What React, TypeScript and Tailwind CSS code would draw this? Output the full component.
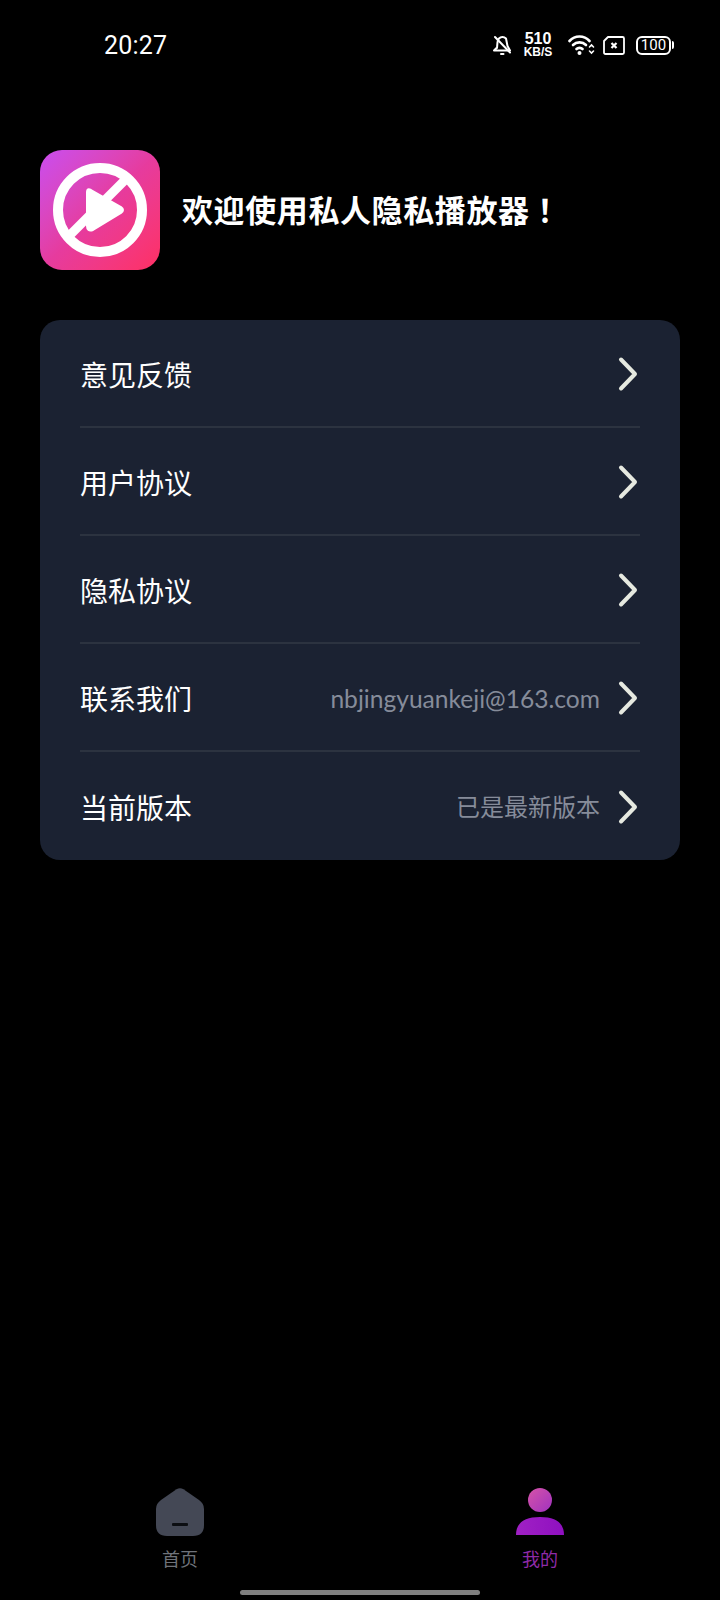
import React from "react";

const cjk = "font-['Noto_Sans_CJK_SC','Noto_Sans',sans-serif]";

function Chevron() {
  return (
    <svg width="20" height="36" viewBox="0 0 20 36" fill="none" className="shrink-0 mr-[2px] translate-y-[1px]">
      <path d="M3 3.5 L17 18 L3 32.5" stroke="#e6e9e0" strokeWidth="4" strokeLinecap="round" strokeLinejoin="round" />
    </svg>
  );
}

function Row({ label, value, last, en }: { label: string; value?: string; last?: boolean; en?: boolean }) {
  return (
    <div className={`mx-10 h-[108px] flex items-center justify-between ${last ? "" : "border-b-2 border-[#2c3340]"}`}>
      <span className={`text-[28px] leading-none text-white translate-y-[1px] ${cjk}`}>{label}</span>
      <div className="flex items-center">
        {value && (
          <span className={`leading-none text-[#868c9a] mr-[18px] ${en ? "text-[24.6px] font-['Lato',sans-serif] font-normal translate-y-[2px]" : `text-[24px] ${cjk}`}`}>
            {value}
          </span>
        )}
        <Chevron />
      </div>
    </div>
  );
}

export default function App() {
  return (
    <div className="w-[720px] h-[1600px] bg-black flex flex-col overflow-hidden font-['Inter',sans-serif]">
      {/* Status bar */}
      <div className="h-[90px] pl-[104px] pr-[46px] flex items-center justify-between text-white">
        <span className="text-[25px] leading-none font-['Roboto',sans-serif] tracking-[0.2px]">20:27</span>
        <div className="flex items-center">
          <svg width="20" height="22" viewBox="0 0 20 22" fill="none" stroke="white" strokeWidth="2" strokeLinecap="round" strokeLinejoin="round">
            <path d="M5 14 C5.5 10 5 6.5 7 4.5 C9 2.5 12 2.7 14 4.5 L15.5 12 L18 16.5 L6 16.5 L2 16.5 L4.5 14" />
            <path d="M3 3 L18 18.5" />
            <path d="M9 20 L11.5 20" />
          </svg>
          <div className="ml-[11px] w-[30px] flex flex-col items-center font-['Liberation_Sans',sans-serif] font-bold">
            <span className="text-[16px] leading-[14px]">510</span>
            <span className="text-[12px] leading-[12px]">KB/S</span>
          </div>
          <svg width="27" height="22" viewBox="0 0 27 22" fill="none" stroke="white" strokeWidth="2.6" strokeLinecap="round" className="ml-[15px]">
            <path d="M1.5 7 C7 1 16 1 21.5 7" />
            <path d="M5 11 C8.5 7.5 14.5 7.5 18 11" />
            <path d="M8.5 15 C10 13.5 13 13.5 14.5 15" />
            <circle cx="11.5" cy="19" r="2" fill="white" stroke="none" />
            <path d="M21.5 13 L23.5 11 L25.5 13 M21.5 17 L23.5 19 L25.5 17" strokeWidth="1.6" />
          </svg>
          <svg width="22" height="19" viewBox="0 0 22 19" fill="none" stroke="white" className="ml-[8px]">
            <path d="M5 1 L19.5 1 Q21 1 21 2.5 L21 16.5 Q21 18 19.5 18 L2.5 18 Q1 18 1 16.5 L1 5 Z" strokeWidth="1.8" strokeLinejoin="round" />
            <path d="M8.5 7 L13.5 12 M13.5 7 L8.5 12" strokeWidth="2.2" />
          </svg>
          <div className="ml-[11px] flex items-center">
            <div className="w-[35px] h-[19px] rounded-[6px] border-2 border-white flex items-center justify-center text-[15px] leading-none font-['Roboto',sans-serif] font-normal">
              100
            </div>
            <div className="ml-[1px] w-[2px] h-[8px] bg-white rounded-r-sm" />
          </div>
        </div>
      </div>

      {/* Welcome */}
      <div className="mt-[60px] ml-10 flex items-center">
        <div className="w-[120px] h-[120px] rounded-[22px] bg-gradient-to-br from-[#c94cf0] via-[#e63b9e] to-[#ff2f62] flex items-center justify-center">
          <svg width="96" height="96" viewBox="0 0 96 96" fill="none">
            <circle cx="48" cy="48" r="42" stroke="white" strokeWidth="10" />
            <path d="M35 30 Q35 26 39 28 L69 45 Q73 48 69 51 L41 68 Q35 70 35 64 Z" fill="white" stroke="white" strokeWidth="2" strokeLinejoin="round" />
            <path d="M14 77 L77 14" stroke="white" strokeWidth="9" />
          </svg>
        </div>
        <span className={`ml-[22px] -translate-y-[2px] text-[31px] leading-none font-bold text-white tracking-[0.6px] ${cjk}`}>
          欢迎使用私人隐私播放器<span className="font-['Noto_Sans_CJK_TC',sans-serif]">！</span>
        </span>
      </div>

      {/* List card */}
      <div className="mt-[50px] mx-10 h-[540px] rounded-[20px] bg-[#1b2232]">
        <Row label="意见反馈" />
        <Row label="用户协议" />
        <Row label="隐私协议" />
        <Row label="联系我们" value="nbjingyuankeji@163.com" en />
        <Row label="当前版本" value="已是最新版本" last />
      </div>

      {/* Tab bar */}
      <div className="mt-auto flex flex-col items-center">
        <div className="w-full flex justify-between px-[126px]">
          <div className="w-[108px] flex flex-col items-center">
            <svg width="48" height="48" viewBox="0 0 48 48">
              <path d="M20.5 1.2 Q24 -0.8 27.5 1.2 L43 12 Q48 15.5 48 21 L48 37 Q48 48 37 48 L11 48 Q0 48 0 37 L0 21 Q0 15.5 5 12 Z" fill="#444855" />
              <rect x="16" y="35" width="16" height="3" rx="1" fill="#0c0e12" />
            </svg>
            <span className={`mt-[10px] text-[18px] leading-[24px] text-[#6f737a] ${cjk}`}>首页</span>
          </div>
          <div className="w-[108px] flex flex-col items-center">
            <svg width="48" height="48" viewBox="0 0 48 48">
              <defs>
                <linearGradient id="head" x1="0" y1="0" x2="1" y2="1">
                  <stop offset="0" stopColor="#d653a8" />
                  <stop offset="1" stopColor="#a032c0" />
                </linearGradient>
                <linearGradient id="body" x1="0" y1="0" x2="1" y2="0">
                  <stop offset="0" stopColor="#a021c4" />
                  <stop offset="1" stopColor="#8f10c0" />
                </linearGradient>
              </defs>
              <circle cx="24" cy="12" r="12" fill="url(#head)" />
              <path d="M0 47 Q0 29 24 29 Q48 29 48 47 Z" fill="url(#body)" />
            </svg>
            <span className={`mt-[10px] text-[18px] leading-[24px] text-[#8f2aa8] ${cjk}`}>我的</span>
          </div>
        </div>
        <div className="mt-[20px] mb-[5px] w-[240px] h-[5px] rounded-full bg-[#808080]" />
      </div>
    </div>
  );
}
